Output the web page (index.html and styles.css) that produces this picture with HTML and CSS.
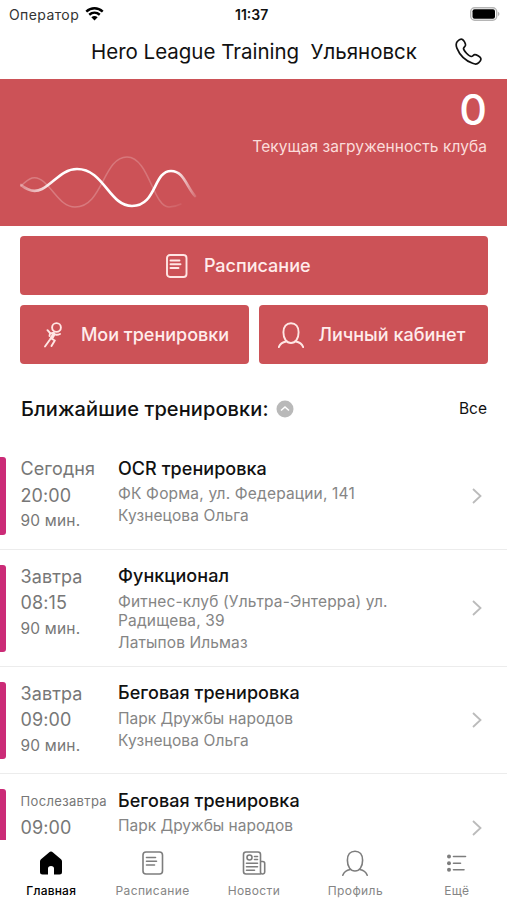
FILE: index.html
```html
<!DOCTYPE html>
<html lang="ru">
<head>
<meta charset="utf-8">
<title>Hero League Training</title>
<link rel="stylesheet" href="styles.css">
</head>
<body>
<svg class="defs" aria-hidden="true">
  <symbol id="sheet" viewBox="0 0 22 24"><rect x="1" y="1" width="19.500" height="22" rx="3"/><path d="M4.500 6.500h9M4.500 10.200h10M4.500 14h8"/></symbol>
  <symbol id="person" viewBox="0 0 26 26"><path d="M13 1.200c4.700 0 7.600 3.400 7.600 9 0 6.700-3.200 10.800-7.600 10.800s-7.600-4.100-7.600-10.800c0-5.600 2.900-9 7.600-9zM.8 25.200c1.200-3.400 3.700-5 7.400-5.700M25.200 25.200c-1.200-3.400-3.700-5-7.400-5.700"/></symbol>
  <symbol id="chevron" viewBox="0 0 10 16"><path d="M1 1l7.500 7L1 15"/></symbol>
</svg>
<div class="status">
  <span class="carrier">Оператор</span>
  <svg class="wifi" viewBox="0 0 18 14"><path d="M1.200 5.200c4.600-4.300 11-4.300 15.600 0M4 8.200c3-2.700 7-2.700 10 0" fill="none" stroke="#000" stroke-width="2.300"/><path d="M6 10.500q3-2.200 6 0L9 13.600z"/></svg>
  <span class="clock">11:37</span>
  <svg class="battery" viewBox="0 0 30 14"><rect x=".7" y=".7" width="26" height="12.600" rx="4" fill="#fff" stroke="#b5b5b5" stroke-width="1.400"/><rect x="2.500" y="2.200" width="22.500" height="9.600" rx="2"/><path d="M28 4.800q3 2.200 0 4.400z" fill="#b5b5b5"/></svg>
</div>
<header class="header">
  <h1 class="title">Hero League Training&nbsp; Ульяновск</h1>
  <svg class="phone" viewBox="0 0 27 27"><path d="M2.300 3.500C4 1.600 6 .5 7.500 1.500c1.500 1.100 3.200 4 3 5.700-.2 1.400-2 2-2 3.400 0 2 5.400 7.800 7.800 7.900 1.400.1 2-1.600 3.400-1.800 1.700-.2 5.200 2 6 3.500.7 1.500-.4 3.100-1.900 4.500-1.500 1.500-3.700 1.700-6.200.6C10.500 22.600 4.600 16.900 1.900 10.100.9 7.500.8 5.300 2.300 3.500z"/></svg>
</header>
<section class="load">
  <div class="count">0</div>
  <div class="caption">Текущая загруженность клуба</div>
  <svg class="wave" viewBox="0 0 180 60">
    <defs>
      <linearGradient id="bright" gradientUnits="userSpaceOnUse" x1="0" y1="0" x2="176" y2="0"><stop offset="0" stop-color="#fff" stop-opacity=".3"/><stop offset=".2" stop-color="#fff"/><stop offset=".88" stop-color="#fff"/><stop offset="1" stop-color="#fff" stop-opacity=".15"/></linearGradient>
      <linearGradient id="faint" gradientUnits="userSpaceOnUse" x1="0" y1="0" x2="165" y2="0"><stop offset="0" stop-color="#fff" stop-opacity=".25"/><stop offset=".85" stop-color="#fff" stop-opacity=".2"/><stop offset="1" stop-color="#fff" stop-opacity=".05"/></linearGradient>
    </defs>
    <path d="M1 34c8-8 14-12 23-4 12 11 18 25 31 25 28 0 28-50 52-50 22 0 26 50 42 50q6 0 12-3" stroke="url(#faint)" stroke-width="1.500"/>
    <path d="M1 33C7 38 14 41 22 37 34 31 42 17 57 17c27 0 32 37 55 37 25 0 21-35 39-35 13 0 15 15 24 25" stroke="url(#bright)" stroke-width="2.600"/>
  </svg>
</section>
<nav class="actions">
  <a class="button wide"><svg class="icon-sheet"><use href="#sheet"/></svg><span>Расписание</span></a>
  <a class="button mine"><svg class="runner" viewBox="0 0 20 26"><circle cx="12.500" cy="5.500" r="4.400"/><path d="M3.500 8.200l3 3.300 3.300-.8L6 17.500 1 24.500M9.800 10.700c.8 2.300 3.400 2.600 6.200 1.300M6 11.500L5.500 14M10.500 12.500L8 17l2.800 1.500-3.300 5.500"/></svg><span>Мои тренировки</span></a>
  <a class="button account"><svg class="icon-person"><use href="#person"/></svg><span>Личный кабинет</span></a>
</nav>
<div class="section-head">
  <h2 class="section-title">Ближайшие тренировки:</h2>
  <svg class="collapse" viewBox="0 0 18 18"><circle cx="9" cy="9" r="8.500"/><path d="M5 10.500L9 7l4 3.500"/></svg>
  <a class="all">Все</a>
</div>
<main class="list">
  <article class="row">
    <div class="bar"></div>
    <div class="when"><div class="day">Сегодня</div><div class="time">20:00</div><div class="length">90 мин.</div></div>
    <div class="what"><h3 class="name">OCR тренировка</h3><p class="place spaced">ФК Форма, ул. Федерации, 141</p><p class="coach">Кузнецова Ольга</p></div>
    <svg class="go"><use href="#chevron"/></svg>
  </article>
  <article class="row">
    <div class="bar"></div>
    <div class="when"><div class="day">Завтра</div><div class="time">08:15</div><div class="length">90 мин.</div></div>
    <div class="what"><h3 class="name">Функционал</h3><p class="place spaced">Фитнес-клуб (Ультра-Энтерра) ул. Радищева, 39</p><p class="coach">Латыпов Ильмаз</p></div>
    <svg class="go"><use href="#chevron"/></svg>
  </article>
  <article class="row">
    <div class="bar"></div>
    <div class="when"><div class="day">Завтра</div><div class="time">09:00</div><div class="length">90 мин.</div></div>
    <div class="what"><h3 class="name">Беговая тренировка</h3><p class="place">Парк Дружбы народов</p><p class="coach">Кузнецова Ольга</p></div>
    <svg class="go"><use href="#chevron"/></svg>
  </article>
  <article class="row">
    <div class="bar"></div>
    <div class="when"><div class="day day-small">Послезавтра</div><div class="time">09:00</div></div>
    <div class="what"><h3 class="name">Беговая тренировка</h3><p class="place">Парк Дружбы народов</p></div>
    <svg class="go"><use href="#chevron"/></svg>
  </article>
</main>
<footer class="tabs">
  <a class="tab active"><svg viewBox="0 0 24 26"><path class="home" d="M12 1.500Q13 1.500 14 2.500L22 9.200q1 1 1 2.300V22q0 2.500-2.500 2.500H15V18.500Q15 16 12 16T9 18.500V24.500H3.500Q1 24.500 1 22V11.500Q1 10.200 2 9.200L10 2.500q1-1 2-1z"/></svg><span>Главная</span></a>
  <a class="tab"><svg viewBox="-1 -1 24 26"><use href="#sheet" width="22" height="24"/></svg><span>Расписание</span></a>
  <a class="tab"><svg viewBox="0 0 24 26"><path d="M18.500 24H4q-2.500 0-2.500-2.500v-17Q1.500 2 4 2h12q2.500 0 2.500 2.500V22q0 2 2 2t2.200-2v-8.500q0-2-2-2h-2.200M4.500 13.200h11M4.500 16.800h11M4.500 20.300h8M12.500 6.500h3M12.500 9.500h3"/><circle cx="7.500" cy="7.500" r="2.500"/></svg><span>Новости</span></a>
  <a class="tab"><svg class="tab-person" viewBox="0 0 26 26"><use href="#person" width="26" height="26"/></svg><span>Профиль</span></a>
  <a class="tab"><svg viewBox="0 0 24 26"><path d="M8.500 6.500H20.500M8.500 13.200h7M8.500 19.800H19"/><g class="dots"><circle cx="4" cy="6.500" r="2"/><circle cx="4" cy="13.200" r="2"/><circle cx="4" cy="19.800" r="2"/></g></svg><span>Ещё</span></a>
</footer>
</body>
</html>
```
FILE: styles.css
```css
* { box-sizing: border-box; }
body {
  margin: 0;
  width: 507px;
  height: 900px;
  overflow: hidden;
  display: flex;
  flex-direction: column;
  background: #fff;
  color: #111;
  font-family: Inter, "Liberation Sans", sans-serif;
}
h1, h2, h3, p { margin: 0; font-weight: 400; }
svg { display: block; flex: none; }
.defs { position: absolute; width: 0; height: 0; }

.status {
  height: 28px;
  flex: none;
  display: grid;
  grid-template-columns: 77px 149px 38px 1fr 30px;
  align-items: center;
  padding: 0 7px 0 9px;
  font-size: 14px;
}
.wifi { width: 19px; height: 15px; margin: -2px 0 0 -1px; }
.carrier { white-space: nowrap; letter-spacing: .4px; color: #333; }
.clock { font-weight: 600; white-space: nowrap; }
.battery { grid-column: 5; width: 30px; height: 14px; margin-top: -1px; }

.header {
  height: 51px;
  flex: none;
  display: flex;
  align-items: center;
  justify-content: space-between;
  padding: 0 25px 4px 91px;
}
.title { font-size: 20.500px; letter-spacing: -.01px; white-space: nowrap; }
.phone { width: 27px; height: 27px; fill: none; stroke: #111; stroke-width: 1.700; }

.load {
  height: 147px;
  flex: none;
  position: relative;
  padding: 4px 20px 0;
  background: #cc5257;
  color: #fff;
  text-align: right;
}
.count { font-size: 43px; font-weight: 450; line-height: 52px; }
.caption { margin-top: 1px; font-size: 15.500px; line-height: 21px; letter-spacing: .07px; color: #fbdcda; }
.wave { position: absolute; left: 20px; top: 73px; width: 180px; height: 60px; fill: none; stroke-linecap: round; }

.actions {
  flex: none;
  display: grid;
  grid-template-columns: 1fr 1fr;
  grid-auto-rows: 59px;
  gap: 10px;
  padding: 10px 19.500px 0 20.400px;
}
.button {
  display: flex;
  align-items: center;
  border-radius: 4px;
  background: #cc5257;
  color: #ffeceb;
  font-size: 18px;
  font-weight: 500;
  white-space: nowrap;
}
.button svg { fill: none; stroke: #ffe6e4; stroke-width: 1.900; stroke-linecap: round; stroke-linejoin: round; }
.wide { grid-column: 1 / -1; padding-left: 145.500px; gap: 16px; }
.icon-sheet { width: 22px; height: 24px; }
.mine { padding-left: 24px; gap: 16.500px; }
.runner { width: 20px; height: 26px; }
.account { padding-left: 19.500px; gap: 14px; }
.icon-person { width: 26px; height: 26px; }

.section-head {
  flex: none;
  height: 78px;
  display: flex;
  align-items: center;
  padding: 11px 20px 0 21px;
}
.section-title { font-size: 20px; font-weight: 500; letter-spacing: .1px; white-space: nowrap; }
.collapse { width: 18px; height: 18px; margin-left: 7px; fill: #b9b9b9; }
.collapse path { fill: none; stroke: #fff; stroke-width: 1.600; }
.all { margin-left: auto; font-size: 15.500px; }

.list { flex: 1; min-height: 0; overflow: hidden; }
.row {
  display: grid;
  grid-template-columns: 6px 98px 300px 1fr;
  min-height: 107.500px;
  border-bottom: 1px solid #ececec;
}
.bar { margin: 15px 0 14px; border-radius: 0 3px 3px 0; background: #cb2b77; }
.when { padding: 14px 0 0 14.500px; color: #777; white-space: nowrap; }
.day, .time { height: 26.500px; font-size: 18px; line-height: 25px; letter-spacing: .1px; }
.day-small { font-size: 13px; line-height: 27px; letter-spacing: .35px; }
.length { font-size: 15.500px; line-height: 23px; letter-spacing: .2px; }
.what { padding: 14.500px 0 14px 14px; color: #858585; font-size: 15.500px; }
.name { color: #111; font-size: 18px; line-height: 23px; font-weight: 500; letter-spacing: .05px; }
.place { margin-top: 4.500px; line-height: 19px; }
.spaced { letter-spacing: .17px; }
.coach { margin-top: 3px; line-height: 19px; letter-spacing: .1px; }
.go { align-self: center; justify-self: end; margin: 1px 25px 0 0; width: 10px; height: 16px; fill: none; stroke: #bbb; stroke-width: 1.800; }

.tabs {
  height: 60px;
  flex: none;
  display: grid;
  grid-template-columns: repeat(5, 1fr);
  background: #fff;
}
.tab {
  display: flex;
  flex-direction: column;
  align-items: center;
  padding: 10px 0 0 1px;
  gap: 7px;
  font-size: 12px;
  line-height: 15px;
  letter-spacing: .4px;
  color: #858585;
}
.tab svg { width: 24px; height: 26px; fill: none; stroke: #7d7d7d; stroke-width: 1.600; stroke-linecap: round; }
.tab .tab-person { width: 26px; }
.tab .home { fill: #000; stroke: none; }
.tab .dots { fill: #7d7d7d; stroke: none; }
.active { color: #000; font-weight: 500; letter-spacing: .2px; }
```
